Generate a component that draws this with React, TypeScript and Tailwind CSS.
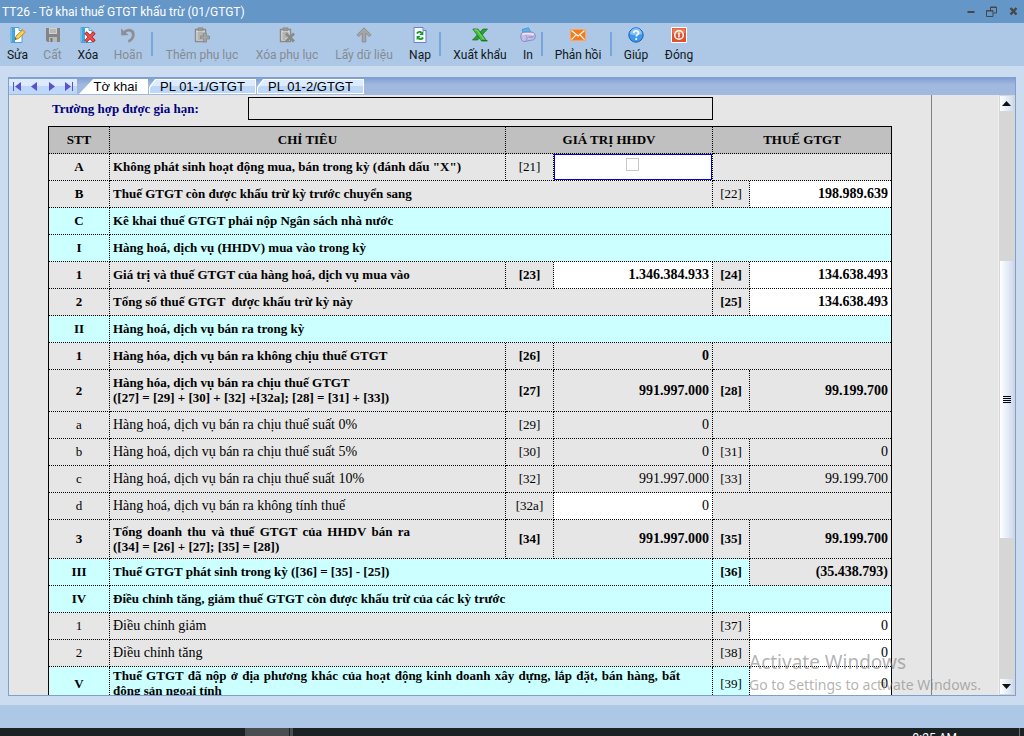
import React from "react";

const ICON = "block h-4 w-4";

function EditIcon() {
  return (
    <svg className={ICON} viewBox="0 0 16 16" aria-hidden="true">
      <path d="M1 .5h8l3 3v12H1z" fill="#fff" stroke="#4ba3dc" />
      <path d="M1.5 1H5v14H1.5z" fill="#3fa6e4" />
      <path d="M9 .5v3h3" fill="#cfe6f6" stroke="#4ba3dc" />
      <path d="M5 12.5l1-3.4 6.6-6.3 2.6 2.4-6.8 6.5z" fill="#ffd24a" stroke="#a07818" strokeWidth=".8" />
      <path d="M12 3.4l1.3-1.2 2.3 2.3-1.2 1.2z" fill="#f0975a" />
      <path d="M5 12.5l.5-1.7 1.2 1.2z" fill="#333" />
    </svg>
  );
}

function SaveIcon() {
  return (
    <svg className={ICON} viewBox="0 0 16 16" aria-hidden="true">
      <path d="M1 1h14v14H2.5L1 13.5z" fill="#858585" />
      <path d="M4 1h8v6H4z" fill="#d0d0d0" />
      <path d="M5 3h6M5 5h6" stroke="#a0a0a0" />
      <path d="M4 10h8v5H4z" fill="#b9b9b9" />
      <path d="M5.5 11h2v4h-2z" fill="#777" />
    </svg>
  );
}

function DeleteIcon() {
  return (
    <svg className={ICON} viewBox="0 0 16 16" aria-hidden="true">
      <path d="M1 .5h8l3 3v12H1z" fill="#fff" stroke="#4ba3dc" />
      <path d="M1.5 1H5v14H1.5z" fill="#3fa6e4" />
      <path d="M9 .5v3h3" fill="#cfe6f6" stroke="#4ba3dc" />
      <path d="M5.5 5.5l9 9M14.5 5.5l-9 9" stroke="#b52222" strokeWidth="3.4" />
      <path d="M6 6l8 8M14 6l-8 8" stroke="#f0504c" strokeWidth="1.9" />
    </svg>
  );
}

function UndoIcon() {
  return (
    <svg className={ICON} viewBox="0 0 16 16" aria-hidden="true">
      <path d="M4 5.5C8 1.5 13.5 3 13.3 8c-.1 3-1.8 5-5 6.5" fill="none" stroke="#8b8f96" strokeWidth="2.8" />
      <path d="M1 1.5l.3 7L8.500 8z" fill="#8b8f96" />
    </svg>
  );
}

function ClipboardIcon({ remove = false }: { remove?: boolean }) {
  return (
    <svg className={ICON} viewBox="0 0 16 16" aria-hidden="true">
      <path d="M1.500 2.500h10v12h-10z" fill="#d9d9d9" stroke="#8a8a8a" strokeWidth="1.400" />
      <path d="M4 .8h5v3H4z" fill="#9a9a9a" stroke="#858585" strokeWidth=".6" />
      <path d="M3.500 6h6M3.500 8h6M3.500 10h5M3.500 12h3" stroke="#8d8d8d" />
      {remove ? (
        <path d="M7 6.500l8 8M15 6.500l-8 8" stroke="#8a8a8a" strokeWidth="2.600" />
      ) : (
        <path d="M9.500 6h3v3h3v3h-3v3h-3v-3h-3V9h3z" fill="#a4a4a4" stroke="#858585" strokeWidth=".8" />
      )}
    </svg>
  );
}

function UpIcon() {
  return (
    <svg className={ICON} viewBox="0 0 16 16" aria-hidden="true">
      <path d="M8 .8l7 7-1.700 1.700L9.800 6.200V15H6.200V6.200L2.700 9.500 1 7.800z" fill="#a6a6a6" stroke="#858585" strokeWidth=".8" />
    </svg>
  );
}

function ReloadIcon() {
  return (
    <svg className={ICON} viewBox="0 0 16 16" aria-hidden="true">
      <path d="M2 .5h9l3 3v12H2z" fill="#f5f8ff" stroke="#6b7fd0" />
      <path d="M11 .5v3h3" fill="#c5d0f4" stroke="#6b7fd0" />
      <path d="M5 6.500c1-2 3.500-2 4.500-.7" fill="none" stroke="#0f9a1c" strokeWidth="1.900" />
      <path d="M11.300 3.800v4.200H7.500z" fill="#0f9a1c" />
      <path d="M11 10.500c-1 2-3.500 2-4.500.7" fill="none" stroke="#0f9a1c" strokeWidth="1.900" />
      <path d="M4.700 13.200V9h3.800z" fill="#0f9a1c" />
    </svg>
  );
}

function ExcelIcon() {
  return (
    <svg className={ICON} viewBox="0 0 16 16" aria-hidden="true">
      <path d="M11 2h4.500L5.500 13H.5z" fill="#2f9e35" stroke="#14701c" strokeWidth=".7" />
      <path d="M.8 2H6l8.500 11.500H9z" fill="#43bd3e" stroke="#14701c" strokeWidth=".7" />
      <path d="M2.500 3H5l6.500 9" fill="none" stroke="#9be07f" strokeWidth=".8" />
      <path d="M9.500 13.800h6" stroke="#14701c" strokeWidth="1.200" />
    </svg>
  );
}

function PrintIcon() {
  return (
    <svg className={ICON} viewBox="0 0 16 16" aria-hidden="true">
      <path d="M2 2.500L8.500 .7l2.500 5-7.500 1z" fill="#58b4ee" stroke="#3e8cc8" strokeWidth=".7" />
      <path d="M.8 8.500c0-2.500 2-3.500 4-3.500h6c3 0 4.500 2 4.500 4.500 0 2-1 3.300-3 3.500L4.500 14.500C2 14.500 .8 12.500 .8 8.500z" fill="#c3bfe6" stroke="#7d78b5" strokeWidth=".8" />
      <path d="M2 7.300c3-1 7-1 12 0" fill="none" stroke="#f1effc" strokeWidth="1.200" />
      <path d="M5.500 8.300c2 1 2 4.500 0 5.700" fill="none" stroke="#8a85be" strokeWidth=".8" />
      <path d="M8.500 10h5" stroke="#8580ba" />
    </svg>
  );
}

function MailIcon() {
  return (
    <svg className={ICON} viewBox="0 0 16 16" aria-hidden="true">
      <path d="M.5 2.500h15v11H.5z" fill="#f47b20" stroke="#f9a45c" />
      <path d="M1.500 3.500L8 9l6.500-5.500M1.500 12.700l4.700-5M14.500 12.700l-4.700-5" fill="none" stroke="#fff" strokeWidth="1.100" />
    </svg>
  );
}

function HelpIcon() {
  return (
    <svg className={ICON} viewBox="0 0 16 16" aria-hidden="true">
      <circle cx="8" cy="8" r="7.200" fill="#3f97ee" stroke="#1c62b8" />
      <path d="M2 7a6 6 0 0112 0c-3 1.500-9 1.500-12 0z" fill="#86c3f8" />
      <path d="M5.700 6c.1-3 4.900-2.900 4.800-.1 0 1.700-2.200 1.700-2.200 3.700" fill="none" stroke="#fff" strokeWidth="1.700" />
      <circle cx="8.200" cy="12" r="1.100" fill="#fff" />
    </svg>
  );
}

function PowerIcon() {
  return (
    <svg className={ICON} viewBox="0 0 16 16" aria-hidden="true">
      <path d="M.5.500h15v15H.5z" fill="#e2502c" stroke="#fff" />
      <path d="M1.500 1.500h13v4c-4 2-9 2-13 1z" fill="#ef7b55" />
      <circle cx="8" cy="8" r="4.300" fill="none" stroke="#fff" strokeWidth="1.500" />
      <path d="M8 5.500v5" stroke="#fff" strokeWidth="1.600" />
    </svg>
  );
}

function Tool({ label, icon, width, disabled = false }: { label: string; icon: React.ReactNode; width: string; disabled?: boolean }) {
  return (
    <button
      type="button"
      disabled={disabled}
      className={`${width} flex shrink-0 flex-col items-center gap-[3px] pt-1 text-xs leading-[18px] whitespace-nowrap text-[#101820] disabled:text-[#858b93]`}
    >
      {icon}
      {label}
    </button>
  );
}

function Separator({ margin }: { margin: string }) {
  return <span className={`${margin} mt-[9px] h-6 w-0.5 shrink-0 bg-[#7aa5dc]`} />;
}

type Cell = { kind: "code" | "value" | "input" | "blank" | "check"; text?: string; span?: number; thin?: boolean; gray?: boolean };
type Row = {
  no: string;
  lines: string[];
  span?: number;
  bold?: boolean;
  cyan?: boolean;
  height?: string;
  justify?: string;
  cells?: Cell[];
};

const code = (text: string, thin = false): Cell => ({ kind: "code", text, thin });
const value = (text: string, gray = false): Cell => ({ kind: "value", text, gray });
const input = (text: string): Cell => ({ kind: "input", text });
const blank: Cell = { kind: "blank", span: 2 };

const rows: Row[] = [
  { no: "A", bold: true, lines: ['Không phát sinh hoạt động mua, bán trong kỳ (đánh dấu "X")'], cells: [code("[21]", true), { kind: "check" }, blank] },
  { no: "B", bold: true, span: 3, lines: ["Thuế GTGT còn được khấu trừ kỳ trước chuyển sang"], cells: [code("[22]", true), input("198.989.639")] },
  { no: "C", bold: true, cyan: true, span: 5, lines: ["Kê khai thuế GTGT phải nộp Ngân sách nhà nước"] },
  { no: "I", bold: true, cyan: true, span: 5, lines: ["Hàng hoá, dịch vụ (HHDV) mua vào trong kỳ"] },
  { no: "1", bold: true, lines: ["Giá trị và thuế GTGT của hàng hoá, dịch vụ mua vào"], cells: [code("[23]"), input("1.346.384.933"), code("[24]"), input("134.638.493")] },
  { no: "2", bold: true, span: 3, lines: ["Tổng số thuế GTGT  được khấu trừ kỳ này"], cells: [code("[25]"), input("134.638.493")] },
  { no: "II", bold: true, cyan: true, span: 5, lines: ["Hàng hoá, dịch vụ bán ra trong kỳ"] },
  { no: "1", bold: true, lines: ["Hàng hóa, dịch vụ bán ra không chịu thuế GTGT"], cells: [code("[26]"), value("0"), blank] },
  {
    no: "2",
    bold: true,
    height: "h-[42px]",
    lines: ["Hàng hóa, dịch vụ bán ra chịu thuế GTGT", "([27] = [29] + [30] + [32] +[32a]; [28] = [31] + [33])"],
    cells: [code("[27]"), value("991.997.000"), code("[28]"), value("99.199.700")],
  },
  { no: "a", lines: ["Hàng hoá, dịch vụ bán ra chịu thuế suất 0%"], cells: [code("[29]"), value("0"), blank] },
  { no: "b", lines: ["Hàng hoá, dịch vụ bán ra chịu thuế suất 5%"], cells: [code("[30]"), value("0"), code("[31]"), value("0")] },
  { no: "c", lines: ["Hàng hoá, dịch vụ bán ra chịu thuế suất 10%"], cells: [code("[32]"), value("991.997.000"), code("[33]"), value("99.199.700")] },
  { no: "d", lines: ["Hàng hoá, dịch vụ bán ra không tính thuế"], cells: [code("[32a]"), input("0"), blank] },
  {
    no: "3",
    bold: true,
    height: "h-[39px]",
    justify: "w-[297px]",
    lines: ["Tổng doanh thu và thuế GTGT của HHDV bán  ra", "([34] = [26] + [27]; [35] = [28])"],
    cells: [code("[34]"), value("991.997.000"), code("[35]"), value("99.199.700")],
  },
  { no: "III", bold: true, cyan: true, span: 3, lines: ["Thuế GTGT phát sinh trong kỳ ([36] = [35] - [25])"], cells: [code("[36]"), value("(35.438.793)", true)] },
  { no: "IV", bold: true, cyan: true, span: 3, lines: ["Điều chỉnh tăng, giảm thuế GTGT còn được khấu trừ của các kỳ trước"], cells: [blank] },
  { no: "1", span: 3, lines: ["Điều chỉnh giảm"], cells: [code("[37]"), input("0")] },
  { no: "2", span: 3, lines: ["Điều chỉnh tăng"], cells: [code("[38]"), input("0")] },
  {
    no: "V",
    bold: true,
    cyan: true,
    span: 3,
    height: "h-[34px]",
    justify: "w-[567px]",
    lines: ["Thuế GTGT đã nộp ở địa phương khác của hoạt động kinh doanh xây dựng, lắp đặt, bán hàng, bất", "động sản ngoại tỉnh"],
    cells: [code("[39]", true), { kind: "input", text: "0", thin: true }],
  },
];

const LINE = "border-b border-r border-dotted border-black pb-px last:border-r-0";

function TaxCell({ cell, row }: { cell: Cell; row: Row }) {
  const label = `${row.no} ${row.lines[0]}`;
  const weight = cell.thin ? "font-normal" : "";
  switch (cell.kind) {
    case "code":
      return <td className={`${LINE} ${weight} text-center`}>{cell.text}</td>;
    case "value":
      return <td className={`${LINE} pr-[3px] text-right text-sm leading-[15px] ${cell.gray ? "bg-[#e6e6e6]" : ""}`}>{cell.text}</td>;
    case "input":
      return (
        <td className={`${LINE} ${weight} bg-white text-sm leading-[15px]`}>
          <input aria-label={label} defaultValue={cell.text} className="block w-full bg-transparent pr-[3px] text-right outline-none" />
        </td>
      );
    case "check":
      return (
        <td className="border-r border-b border-dotted border-black bg-white align-top">
          <div className="flex h-[26px] justify-center border border-[#0000d8] pt-[3px] pr-0.5">
            <input type="checkbox" aria-label={label} className="h-[13px] w-[13px] appearance-none border border-[#c8c8c8] bg-white" />
          </div>
        </td>
      );
    default:
      return <td colSpan={cell.span} className={LINE} />;
  }
}

function TaxTable() {
  return (
    <table className="w-[844px] table-fixed border-separate border-spacing-0 border border-b-0 border-black text-[13px] leading-[15px]">
      <colgroup>
        <col className="w-[61px]" />
        <col className="w-[396px]" />
        <col className="w-12" />
        <col className="w-[159px]" />
        <col className="w-[37px]" />
        <col className="w-[141px]" />
      </colgroup>
      <thead>
        <tr className="h-[27px] bg-[#c0c0c0]">
          <th className={LINE}>STT</th>
          <th className={LINE}>CHỈ TIÊU</th>
          <th className={LINE} colSpan={2}>GIÁ TRỊ HHDV</th>
          <th className={LINE} colSpan={2}>THUẾ GTGT</th>
        </tr>
      </thead>
      <tbody>
        {rows.map((row, i) => (
          <tr key={i} className={`${row.height ?? "h-[27px]"} ${row.bold ? "font-bold" : ""} ${row.cyan ? "bg-[#ccffff]" : "bg-[#e6e6e6]"}`}>
            <td className={`${LINE} text-center`}>{row.no}</td>
            <td colSpan={row.span} className={`${LINE} pl-[3px] whitespace-pre ${row.bold ? "" : "text-sm leading-[15px]"}`}>
              {row.lines.map((line, n) => (
                <div key={n} className={row.justify && n === 0 ? `${row.justify} whitespace-normal [text-align-last:justify]` : ""}>
                  {line}
                </div>
              ))}
            </td>
            {row.cells?.map((cell, n) => <TaxCell key={n} cell={cell} row={row} />)}
          </tr>
        ))}
      </tbody>
    </table>
  );
}

function NavButton({ label, path }: { label: string; path: string }) {
  return (
    <button type="button" aria-label={label} className="flex w-[17px] items-center justify-center">
      <svg viewBox="0 0 9 9" className="h-[9px] w-[9px]" aria-hidden="true">
        <path d={path} fill="#5a50d0" />
      </svg>
    </button>
  );
}

function SheetTab({ label, width }: { label: string; width: string }) {
  return (
    <button type="button" role="tab" aria-selected="false" className={`${width} ml-px flex bg-white p-px [clip-path:polygon(6px_0,100%_0,100%_100%,0_100%,0_8px)]`}>
      <span className="h-full w-full bg-linear-to-b from-[#dcebfd] from-50% to-[#bcd7f8] to-50% text-center leading-[14px] [clip-path:polygon(6px_0,100%_0,100%_100%,0_100%,0_8px)]">
        {label}
      </span>
    </button>
  );
}

export default function App() {
  return (
    <div className="flex h-screen flex-col overflow-hidden bg-[#cbdcf1] font-[Roboto,'Noto_Sans',sans-serif]">
      <header className="flex h-[23px] shrink-0 items-center justify-between bg-[#6496c8] pr-[6px] pl-0.5">
        <h1 className="text-xs leading-[18px] whitespace-nowrap text-white">TT26 - Tờ khai thuế GTGT khấu trừ (01/GTGT)</h1>
        <div className="flex items-center gap-[11px] text-[#474747]">
          <button type="button" aria-label="Thu nhỏ">
            <svg viewBox="0 0 8 11" className="h-[11px] w-2"><path d="M.5 5h7v2h-7z" fill="currentColor" /></svg>
          </button>
          <button type="button" aria-label="Khôi phục">
            <svg viewBox="0 0 11 11" className="h-[11px] w-[11px]" fill="none" stroke="currentColor">
              <path d="M4.500 4V1h6v6H7.500M4 1.500h7M.5 4.500h6.500v6H.500zM0 5h7" />
            </svg>
          </button>
          <button type="button" aria-label="Đóng cửa sổ" className="ml-px">
            <svg viewBox="0 0 9 11" className="h-[11px] w-[9px]"><path d="M1.500 2l6 6.500M7.500 2l-6 6.500" stroke="currentColor" strokeWidth="2.400" /></svg>
          </button>
        </div>
      </header>

      <nav aria-label="Thanh công cụ" className="flex h-[43px] shrink-0 items-start bg-[#adc8e6]">
        <Tool label="Sửa" icon={<EditIcon />} width="w-[35px]" />
        <Tool label="Cất" icon={<SaveIcon />} width="w-[35px]" disabled />
        <Tool label="Xóa" icon={<DeleteIcon />} width="w-9" />
        <Tool label="Hoãn" icon={<UndoIcon />} width="w-11" disabled />
        <Separator margin="mx-px" />
        <Tool label="Thêm phụ lục" icon={<ClipboardIcon />} width="w-24" disabled />
        <Tool label="Xóa phụ lục" icon={<ClipboardIcon remove />} width="w-[74px]" disabled />
        <Tool label="Lấy dữ liệu" icon={<UpIcon />} width="w-20" disabled />
        <Tool label="Nạp" icon={<ReloadIcon />} width="w-8" />
        <Separator margin="mx-[3px]" />
        <Tool label="Xuất khẩu" icon={<ExcelIcon />} width="w-[72px]" />
        <Tool label="In" icon={<PrintIcon />} width="w-6" />
        <Separator margin="ml-px mr-[5px]" />
        <Tool label="Phản hồi" icon={<MailIcon />} width="w-[60px]" />
        <Separator margin="ml-0.5 mr-1" />
        <Tool label="Giúp" icon={<HelpIcon />} width="w-10" />
        <Tool label="Đóng" icon={<PowerIcon />} width="w-[46px]" />
      </nav>

      <main className="mx-2 mt-[11px] mb-[9px] flex min-h-0 flex-1 flex-col border border-[#7f9fcf]">
        <div role="tablist" className="flex h-[17px] shrink-0 items-stretch bg-linear-to-b from-[#7f9fd3] to-[#a2b9df] to-40% pt-px pb-px font-['Liberation_Sans',Arial,sans-serif] text-[13px] text-black">
          <div className="flex w-[68px] bg-linear-to-b from-[#dcebfd] from-50% to-[#bcd7f8] to-50%">
            <NavButton label="Trang đầu" path="M0 0h1v9H0zM8 0v9L2 4.500z" />
            <NavButton label="Trang trước" path="M7 0v9L1 4.500z" />
            <NavButton label="Trang sau" path="M2 0v9l6-4.500z" />
            <NavButton label="Trang cuối" path="M8 0h1v9H8zM1 0v9l6-4.500z" />
          </div>
          <button type="button" role="tab" aria-selected="true" className="ml-0.5 w-[69px] bg-white pl-1 leading-[15px] [clip-path:polygon(14px_0,100%_0,100%_100%,0_100%)]">
            Tờ khai
          </button>
          <SheetTab label="PL 01-1/GTGT" width="w-[107px]" />
          <SheetTab label="PL 01-2/GTGT" width="w-[107px]" />
        </div>

        <div className="flex min-h-0 flex-1 bg-[#e6e6e6]">
          <div className="min-w-0 flex-1 overflow-hidden">
            <div className="h-full w-[923px] overflow-hidden border-r border-[#808080] pt-0.5 pl-[39px] font-['Liberation_Serif','Times_New_Roman',serif] text-black">
              <div className="mb-[6px] flex h-[23px] items-center pl-1 text-[13px]">
                <label htmlFor="extension" className="w-[196px] font-bold text-[#000080]">Trường hợp được gia hạn:</label>
                <input id="extension" className="h-full w-[465px] border border-black bg-transparent px-1 outline-none" />
              </div>
              <TaxTable />
            </div>
          </div>

          <div className="flex w-[17px] shrink-0 flex-col items-start border-l border-[#efefef] bg-[#d6d6d6] pt-px pb-px pl-px">
            <button type="button" aria-label="Cuộn lên" className="flex h-[15px] w-[13px] shrink-0 items-center justify-center bg-linear-to-r from-white to-[#d0def0]">
              <svg viewBox="0 0 9 5" className="h-[5px] w-[9px]"><path d="M4.500 0L9 5H0z" fill="#111" /></svg>
            </button>
            <div className="flex w-[13px] flex-1 flex-col">
              <div className="flex-[150]" />
              <div className="flex flex-[277] flex-col items-center justify-center gap-px bg-linear-to-r from-white to-[#d0def0]">
                <span className="h-px w-2 bg-black" />
                <span className="h-px w-2 bg-black" />
                <span className="h-px w-2 bg-black" />
                <span className="h-px w-2 bg-black" />
              </div>
              <div className="flex-[141]" />
            </div>
            <button type="button" aria-label="Cuộn xuống" className="flex h-[15px] w-[13px] shrink-0 items-center justify-center bg-linear-to-r from-white to-[#d0def0]">
              <svg viewBox="0 0 9 5" className="h-[5px] w-[9px]"><path d="M4.500 5L9 0H0z" fill="#111" /></svg>
            </button>
          </div>
        </div>
      </main>

      <footer className="h-[23px] shrink-0 bg-[#adc8e6]" />
      <div className="flex h-2 shrink-0 justify-between overflow-hidden bg-[#1c2124]">
        <div className="ml-[245px] flex h-full">
          <span className="w-11 bg-[#4b4e51]" />
          <span className="ml-px w-[3px] bg-[#4b4e51]" />
        </div>
        <div className="flex h-full items-start">
          <time className="mr-[62px] pt-0.5 text-xs leading-[16px] whitespace-nowrap text-white">9:25 AM</time>
          <span className="mr-1 h-full w-px bg-[#6b6e70]" />
        </div>
      </div>

      <div className="pointer-events-none absolute top-[651px] left-[749px] font-['Noto_Sans','Open_Sans',sans-serif] whitespace-nowrap text-[#808080]/60">
        <p className="text-[19px] leading-[23px]">Activate Windows</p>
        <p className="text-sm leading-[22px]">Go to Settings to activate Windows.</p>
      </div>
    </div>
  );
}
